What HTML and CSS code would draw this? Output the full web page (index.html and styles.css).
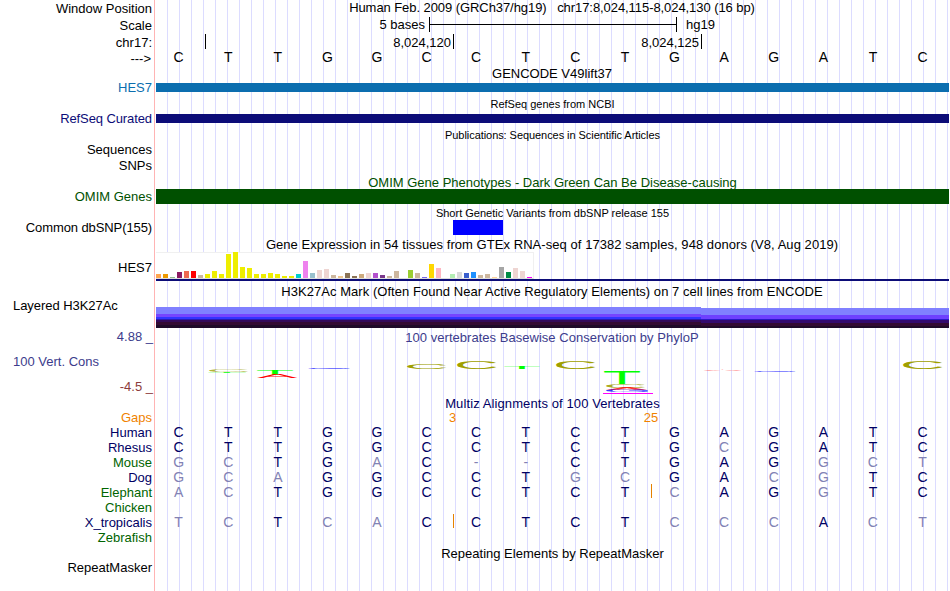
FILE: index.html
```html
<!DOCTYPE html>
<html lang="en">
<head>
    <meta charset="UTF-8">
    <title>Human chr17:8,024,115-8,024,130</title>
    <link rel="stylesheet" href="styles.css">
</head>
<body>
<div class="browser">
    <div class="track position">
        <div class="side"><span>Window Position</span></div>
        <div class="data"><div class="title t-position">Human Feb. 2009 (GRCh37/hg19) &nbsp; chr17:8,024,115-8,024,130 (16 bp)</div></div>
    </div>
    <div class="track scale">
        <div class="side"><span>Scale</span></div>
        <div class="data scale-row">
            <span class="scale-size">5 bases</span>
            <span class="scale-bar"><i></i></span>
            <span>hg19</span>
        </div>
    </div>
    <div class="track ruler">
        <div class="side"><span>chr17:</span></div>
        <div class="data ruler-row">
            <span class="tick first"></span>
            <span class="tick">8,024,120</span>
            <span class="tick">8,024,125</span>
        </div>
    </div>
    <div class="track sequence">
        <div class="side"><span>---&gt;</span></div>
        <div class="data"><div class="bases" data-seq="CTTGGCCTCTGAGATC"></div></div>
    </div>
    <div class="track gencode">
        <div class="side"><span>HES7</span></div>
        <div class="data">
            <div class="title t-gencode">GENCODE V49lift37</div>
            <div class="gene"></div>
        </div>
    </div>
    <div class="track refseq">
        <div class="side"><span>RefSeq Curated</span></div>
        <div class="data">
            <div class="title small">RefSeq genes from NCBI</div>
            <div class="gene"></div>
        </div>
    </div>
    <div class="track pubs">
        <div class="side"><span>Sequences</span><span>SNPs</span></div>
        <div class="data"><div class="title small">Publications: Sequences in Scientific Articles</div></div>
    </div>
    <div class="track omim">
        <div class="side"><span>OMIM Genes</span></div>
        <div class="data">
            <div class="title">OMIM Gene Phenotypes - Dark Green Can Be Disease-causing</div>
            <div class="gene"></div>
        </div>
    </div>
    <div class="track dbsnp">
        <div class="side"><span>Common dbSNP(155)</span></div>
        <div class="data">
            <div class="title small">Short Genetic Variants from dbSNP release 155</div>
            <div class="snp"></div>
        </div>
    </div>
    <div class="track gtex">
        <div class="side"><span>HES7</span></div>
        <div class="data">
            <div class="title t-gtex">Gene Expression in 54 tissues from GTEx RNA-seq of 17382 samples, 948 donors (V8, Aug 2019)</div>
            <div class="tissues" id="tissues"></div>
            <div class="gene"></div>
        </div>
    </div>
    <div class="track h3k27">
        <div class="side"><span>Layered H3K27Ac</span></div>
        <div class="data">
            <div class="title t-h3k27">H3K27Ac Mark (Often Found Near Active Regulatory Elements) on 7 cell lines from ENCODE</div>
            <div class="layers">
                <div class="high"></div>
                <div class="low"></div>
            </div>
        </div>
    </div>
    <div class="track phylop">
        <div class="side">
            <span class="max">4.88 _</span>
            <span class="name">100 Vert. Cons</span>
            <span class="min">-4.5 _</span>
        </div>
        <div class="data">
            <div class="title t-phylop">100 vertebrates Basewise Conservation by PhyloP</div>
            <svg class="logo" id="logo" width="793" height="50" viewBox="156 345 793 50"></svg>
        </div>
    </div>
    <div class="track multiz">
        <div class="side">
            <span class="gaps">Gaps</span>
            <span>Human</span>
            <span>Rhesus</span>
            <span class="green">Mouse</span>
            <span>Dog</span>
            <span class="green">Elephant</span>
            <span class="green">Chicken</span>
            <span>X_tropicalis</span>
            <span class="green">Zebrafish</span>
        </div>
        <div class="data">
            <div class="title t-multiz">Multiz Alignments of 100 Vertebrates</div>
            <div class="gap-counts gaps"><span class="after-6">3</span><span class="after-10">25</span></div>
            <!-- lower case bases differ from human -->
            <div class="bases" data-seq="CTTGGCCTCTGAGATC"></div>
            <div class="bases" data-seq="CTTGGCCTCTGcGATC"></div>
            <div class="bases" data-seq="gcTGaC--CTGAGgct"></div>
            <div class="bases" data-seq="gcaGGCCTgcGAcgTC"></div>
            <div class="bases" data-seq="acTGGCCTCTcAGgTC"><i class="insert after-10"></i></div>
            <div class="bases"></div>
            <div class="bases" data-seq="tcTcaCCTCTcccAct"><i class="insert after-6"></i></div>
            <div class="bases"></div>
        </div>
    </div>
    <div class="track rmsk">
        <div class="side"><span>RepeatMasker</span></div>
        <div class="data"><div class="title">Repeating Elements by RepeatMasker</div></div>
    </div>
</div>
<script>
    // base letters, one grid column each
    var rows = document.querySelectorAll("[data-seq]");
    for (var i = 0; i < rows.length; i++) {
        var seq = rows[i].getAttribute("data-seq");
        for (var j = 0; j < seq.length; j++) {
            var base = document.createElement("span");
            base.textContent = seq[j].toUpperCase();
            base.className = "c" + (j + 1);
            if (seq[j] !== seq[j].toUpperCase() || seq[j] === "-") {
                base.className += " diff";
            }
            rows[i].appendChild(base);
        }
    }

    // median expression per tissue: [color, height]
    var tissues = [
        ["#ffa54f", 4], ["#ee9a00", 4], ["#8fbc8f", 1], ["#8b1c62", 6], ["#ee6a50", 7], ["#ff0000", 7],
        ["#cdb79e", 3], ["#eeee00", 4], ["#eeee00", 7], ["#eeee00", 4], ["#eeee00", 24], ["#eeee00", 26],
        ["#eeee00", 11], ["#eeee00", 10], ["#eeee00", 4], ["#eeee00", 4], ["#eeee00", 5], ["#eeee00", 4],
        ["#eeee00", 2], ["#eeee00", 2], ["#00cdcd", 4], ["#ee82ee", 17], ["#9ac0cd", 5], ["#eed5d2", 8],
        ["#eed5d2", 9], ["#cdb79e", 3], ["#eec591", 2], ["#8b7355", 5], ["#8b7355", 2], ["#cdaa7d", 4],
        ["#eed5d2", 5], ["#b452cd", 5], ["#7a378b", 3], ["#cdb79e", 2], ["#cdb79e", 7], ["#cdb79e", 0],
        ["#9acd32", 8], ["#cdb79e", 5], ["#7a67ee", 1], ["#ffd700", 14], ["#ffb6c1", 10], ["#cd9b1d", 0],
        ["#b4eeb4", 4], ["#d9d9d9", 6], ["#3a5fcd", 5], ["#1e90ff", 6], ["#cdb79e", 3], ["#cdb79e", 4],
        ["#ffd39b", 1], ["#a6a6a6", 11], ["#008b45", 6], ["#eed5d2", 10], ["#eed5d2", 7], ["#ff00ff", 1]
    ];
    var box = document.getElementById("tissues");
    for (var k = 0; k < tissues.length; k++) {
        var bar = document.createElement("i");
        bar.style.height = tissues[k][1] + "px";
        bar.style.backgroundColor = tissues[k][0];
        box.appendChild(bar);
    }

    // ink box of each letter at font size 100: left, right, top, bottom
    var ink = {
        A: [0, 66, -69, 0],
        C: [5, 68, -70, 1],
        G: [5, 71, -70, 1],
        T: [2, 59, -69, 0]
    };
    // letter, left, right, top, bottom, color, opacity
    var letters = [
        ["C", 209, 248, 370.2, 372.2, "#a0a000", 0.8],
        ["T", 208, 246, 371.8, 373.2, "#00ff00", 0.8],
        ["T", 257, 293, 370, 374.5, "#00ff00", 1],
        ["A", 257, 297, 374, 378, "#ff0000", 1],
        ["G", 308, 350, 368, 369, "#0000ff", 1],
        ["C", 407, 446, 363.8, 369, "#a0a000", 1],
        ["C", 457, 496, 361, 369, "#a0a000", 1],
        ["T", 504, 540, 367, 369.2, "#00ff00", 1],
        ["C", 556, 595, 361, 369, "#a0a000", 1],
        ["T", 604, 640, 371, 384, "#00ff00", 1],
        ["C", 606, 645, 384, 388, "#a0a000", 0.9],
        ["A", 606, 647, 388, 390, "#ff0000", 0.8],
        ["G", 606, 648, 390, 391.8, "#0000ff", 0.8],
        ["A", 703, 742, 370, 371.2, "#ff0000", 1],
        ["G", 754, 796, 370.1, 371.8, "#0000ff", 0.9],
        ["C", 903, 942, 361, 369, "#a0a000", 1]
    ];
    var logo = document.getElementById("logo");
    var ns = "http://www.w3.org/2000/svg";
    letters.forEach(function (l) {
        var b = ink[l[0]];
        var sx = (l[2] - l[1]) / (b[1] - b[0]);
        var sy = (l[4] - l[3]) / (b[3] - b[2]);
        var text = document.createElementNS(ns, "text");
        text.setAttribute("transform", "matrix(" + [sx, 0, 0, sy, l[1] - b[0] * sx, l[4] - b[3] * sy].join(" ") + ")");
        text.setAttribute("fill", l[5]);
        text.setAttribute("fill-opacity", l[6]);
        text.textContent = l[0];
        logo.appendChild(text);
    });
    // score below the minimum
    var clip = document.createElementNS(ns, "rect");
    clip.setAttribute("x", 603);
    clip.setAttribute("y", 393);
    clip.setAttribute("width", 50);
    clip.setAttribute("height", 1);
    clip.setAttribute("fill", "#ff00ff");
    logo.appendChild(clip);
</script>
</body>
</html>
```
FILE: styles.css
```css
html, body {
    margin: 0;
    background-color: #fff;
}

.browser {
    width: 949px;
    height: 591px;
    overflow: hidden;
    font: 13px/15px "Liberation Sans", Arial, sans-serif;
    color: #000;
}

.track {
    display: flex;
}

.side {
    box-sizing: border-box;
    display: flex;
    flex-direction: column;
    align-items: flex-end;
    width: 155px;
    padding-right: 2px;
    border-right: 1px solid #ffb4b4;
    white-space: nowrap;
}

.data {
    width: 793px;
    margin-left: 1px;
    background-image: repeating-linear-gradient(to right, transparent 0, transparent 11px, #dcdcff 11px, #dcdcff 12px);
}

.title {
    height: 15px;
    text-align: center;
    white-space: pre;
}

.small {
    font-size: 11px;
}

.t-position {
    letter-spacing: -0.07px;
    margin-right: 1px;
}

.t-gencode {
    margin-right: 1px;
}

.t-gtex {
    letter-spacing: 0.055px;
    margin-right: 1px;
}

.t-h3k27 {
    letter-spacing: 0.045px;
    margin-right: 1px;
}

.t-phylop {
    letter-spacing: 0.03px;
    margin-right: 1px;
}

.t-multiz {
    letter-spacing: 0.1px;
}

.gene {
    height: 9px;
}

.bases, .gap-counts {
    display: grid;
    grid-template-columns: repeat(16, 49.6px);
    height: 15px;
    margin-left: -2px;
    text-align: center;
}

.bases {
    margin-left: -2.2px;
    font-size: 14px;
}

.bases span {
    grid-row: 1;
}

/* ruler */
.position {
    height: 17px;
}

.scale {
    height: 17px;
}

.position .side, .scale .side, .ruler .side {
    padding-top: 1px;
}

.scale-row {
    display: flex;
}

.scale-size {
    width: 269px;
    text-align: right;
}

.scale-bar {
    display: flex;
    align-items: center;
    box-sizing: border-box;
    width: 248px;
    height: 15px;
    margin: 0 9px 0 4px;
    border: solid #000;
    border-width: 0 1px;
}

.scale-bar i {
    flex: 1;
    height: 1px;
    background-color: #000;
}

.ruler {
    height: 15px;
}

.ruler-row {
    display: flex;
}

.tick {
    box-sizing: border-box;
    width: 248px;
    height: 15px;
    padding: 1px 2px 0 0;
    border-right: 1px solid #000;
    text-align: right;
}

.tick.first {
    width: 50px;
}

.sequence {
    height: 17px;
}

.sequence .side {
    padding-top: 2px;
    height: 17px;
    padding-right: 3px;
}

.sequence .bases {
    padding-top: 1px;
}

/* genes */
.gencode {
    height: 30px;
}

.gencode .side {
    padding-top: 14px;
    color: #0c6eaf;
}

.gencode .gene {
    margin-top: 2px;
    background-color: #0c6eaf;
}

.refseq {
    height: 31px;
}

.refseq .side {
    padding-top: 15px;
    color: #0c0c78;
    letter-spacing: -0.1px;
}

.refseq .title, .pubs .title, .dbsnp .title {
    padding-top: 1px;
}

.refseq .gene {
    margin-top: 1px;
    background-color: #0c0c78;
}

.refseq .gene, .pubs .title {
    margin-top: 2px;
}

.pubs {
    height: 46px;
}

.pubs .side {
    padding-top: 15px;
    gap: 1px;
}

.pubs .title {
    margin-top: 0;
    letter-spacing: -0.06px;
}

.omim {
    height: 32px;
    color: #005000;
}

.omim .side {
    padding-top: 16px;
}

.omim .title {
    height: 14px;
    padding-top: 2px;
}

.omim .gene {
    height: 15px;
    background-color: #005000;
}

.dbsnp {
    height: 32px;
}

.dbsnp .side {
    padding-top: 15px;
    letter-spacing: -0.1px;
}

.dbsnp .title {
    height: 14px;
}

.snp {
    width: 50px;
    height: 15px;
    margin-left: 297px;
    background-color: #00f;
}

/* expression */
.gtex {
    height: 47px;
}

.gtex .side {
    padding-top: 23px;
}

.tissues {
    box-sizing: border-box;
    display: flex;
    align-items: flex-end;
    gap: 2px;
    width: 378px;
    height: 27px;
    border: solid #f0f0f0;
    border-width: 0 1px 1px 0;
    border-bottom-color: #dcdcdc;
    background-color: #fff;
    box-shadow: inset 0 1px #f0f0f0;
}

.tissues i {
    flex: none;
    width: 5px;
}

.gtex .gene {
    height: 2px;
    background-color: #0c0c78;
}

/* histone marks */
.h3k27 {
    height: 45px;
}

.h3k27 .side {
    align-items: flex-start;
    padding: 14px 0 0 13px;
    letter-spacing: -0.05px;
}

.layers {
    display: flex;
    align-items: flex-end;
    height: 21px;
    margin-top: 8px;
}

.high {
    width: 545px;
    height: 21px;
    background: linear-gradient(#8080ff 7px, #7744ff 7px, #7744ff 10px, #3333ff 10px, #3333ff 12px, #2a1ab4 12px, #2a1ab4 13px, #330a5a 13px, #330a5a 15px, #330a33 15px, #330a33 18px, #1e0a28 18px);
}

.low {
    width: 248px;
    height: 20px;
    background: linear-gradient(#8080ff 7px, #6e40ff 7px, #6e40ff 11px, #2a1ac8 11px, #2a1ac8 12px, #330a6e 12px, #330a6e 15px, #330a33 15px, #330a33 18px, #1e0a28 18px);
}

/* conservation */
.phylop {
    height: 66px;
    color: #3c3c8c;
}

.phylop .side {
    gap: 10px;
    padding-right: 1px;
}

.phylop .title {
    padding-top: 1px;
}

.phylop .name {
    align-self: flex-start;
    margin-left: 13px;
}

.phylop .min {
    color: #8c3c3c;
}

.logo {
    display: block;
    font-size: 100px;
}

.multiz {
    height: 150px;
    color: #000064;
}

.multiz .side {
    padding-top: 15px;
}

.multiz .title {
    height: 14px;
    padding-top: 1px;
}

.green {
    color: #006400;
}

.gaps {
    color: #f08200;
}

.diff {
    color: #8282b4;
}

.after-6 {
    grid-column: 6 / span 2;
}

.after-10 {
    grid-column: 10 / span 2;
}

.gap-counts span {
    padding-left: 2px;
}

.insert {
    grid-row: 1;
    justify-self: center;
    width: 1px;
    height: 14px;
    margin-top: -1px;
    margin-left: 4px;
    background-color: #e68200;
}

.rmsk {
    height: 46px;
}

.rmsk .side {
    padding-top: 15px;
}

.rmsk .title {
    padding-top: 1px;
}

.c1 { grid-column: 1; }
.c2 { grid-column: 2; }
.c3 { grid-column: 3; }
.c4 { grid-column: 4; }
.c5 { grid-column: 5; }
.c6 { grid-column: 6; }
.c7 { grid-column: 7; }
.c8 { grid-column: 8; }
.c9 { grid-column: 9; }
.c10 { grid-column: 10; }
.c11 { grid-column: 11; }
.c12 { grid-column: 12; }
.c13 { grid-column: 13; }
.c14 { grid-column: 14; }
.c15 { grid-column: 15; }
.c16 { grid-column: 16; }
```
